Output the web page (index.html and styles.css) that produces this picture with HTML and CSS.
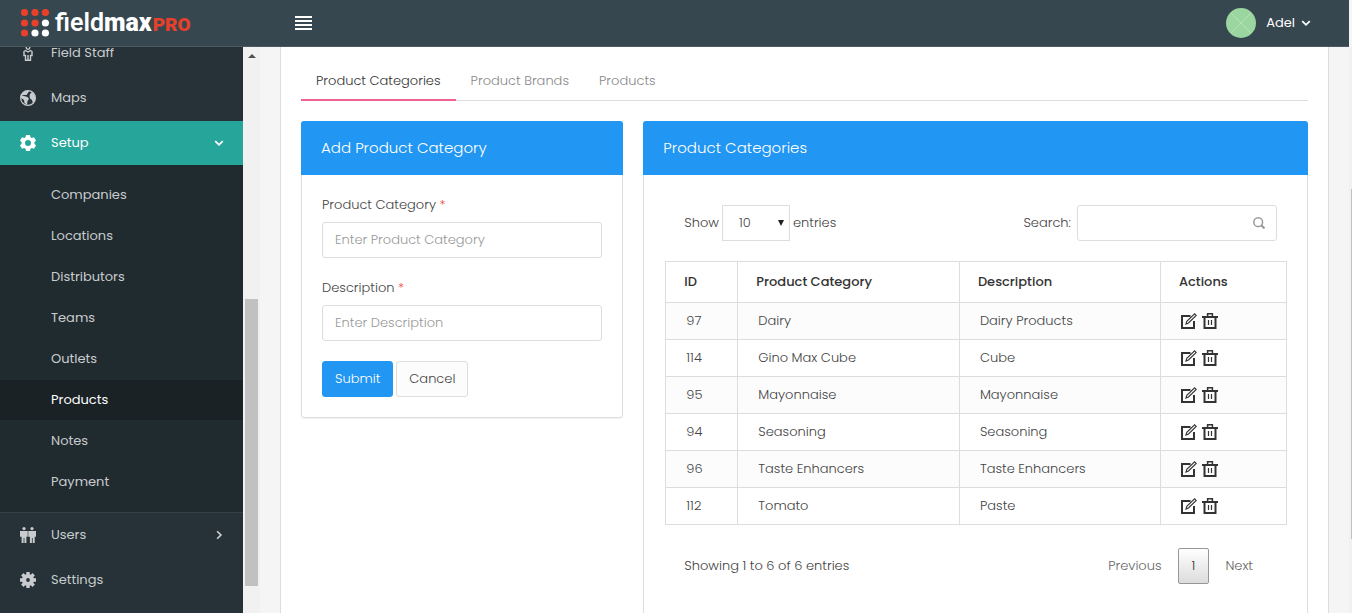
FILE: index.html
```
<!DOCTYPE html>
<html lang="en">
<head>
  <meta charset="UTF-8">
  <title>FieldMax Pro - Product Categories</title>
  <meta name="viewport" content="width=device-width,initial-scale=1">
  <link rel="stylesheet" href="styles.css">
</head>
<body>

  <!-- icons used more than once -->
  <svg class="sprite" aria-hidden="true">
    <symbol id="icon-edit" viewBox="0 0 16 16">
      <path d="M9.500 3H1v12h12V8" fill="none" stroke="currentColor" stroke-width="2"/>
      <path d="M5 11l.8-2.600L13.600.8l1.600 1.600L7.500 10z" fill="none" stroke="currentColor" stroke-width="1.100"/>
    </symbol>
    <symbol id="icon-trash" viewBox="0 0 16 16">
      <path d="M0 4h16M2.500 4v11h11V4" fill="none" stroke="currentColor" stroke-width="2"/>
      <path d="M5.600 3V.8h4.800V3" fill="none" stroke="currentColor" stroke-width="1.500"/>
      <path d="M6.500 7v5M9.500 7v5" stroke="currentColor" stroke-width="1.200"/>
    </symbol>
    <symbol id="icon-down" viewBox="0 0 8 8">
      <path d="M1 2.500L4 5.500l3-3" fill="none" stroke="currentColor" stroke-width="1.400"/>
    </symbol>
  </svg>

  <header class="navbar">
    <a href="#" class="brand">
      <svg class="brand-dots" viewBox="0 0 28 28" aria-hidden="true">
        <g fill="#e8402a">
          <circle cx="3.500" cy="3.500" r="3.600"/><circle cx="14" cy="3.500" r="3.600"/><circle cx="24.400" cy="3.500" r="3.600"/>
          <circle cx="3.500" cy="14" r="3.600"/><circle cx="14" cy="14" r="3.600"/><circle cx="3.500" cy="24" r="3.600"/>
        </g>
        <g fill="#fff">
          <circle cx="24.400" cy="14" r="3.600"/><circle cx="14" cy="24" r="3.600"/><circle cx="24.400" cy="24" r="3.600"/>
        </g>
      </svg>
      <span class="brand-name">field<b>max</b></span><span class="brand-pro">PRO</span>
    </a>
    <button type="button" class="menu-toggle" aria-label="Toggle menu">
      <svg viewBox="0 0 17 14"><path d="M0 1h17M0 5h17M0 9h17M0 13h17" stroke="#fff" stroke-width="2"/></svg>
    </button>
    <button type="button" class="user">
      <svg class="avatar" viewBox="0 0 30 30" aria-hidden="true">
        <circle cx="15" cy="15" r="15" fill="#9bd5a0"/>
        <path d="M5 5l20 20M25 5L5 25" stroke="#b4dfb7" stroke-width="1"/>
      </svg>
      Adel
      <svg class="caret"><use href="#icon-down"/></svg>
    </button>
  </header>

  <div class="page">
    <nav class="sidebar">
      <ul class="nav">
        <li>
          <a href="#">
            <svg class="nav-icon" viewBox="0 0 16 16"><circle cx="8" cy="2.500" r="1.800" fill="none" stroke="currentColor" stroke-width="1.300"/><path d="M5.500 5.500L8 7l2.500-1.500 1.500 1v4h-1.500v4.800h-5v-4.800H4v-4zM8 10v5" fill="none" stroke="currentColor" stroke-width="1.400"/></svg>
            Field Staff
          </a>
        </li>
        <li>
          <a href="#">
            <svg class="nav-icon" viewBox="0 0 16 16"><circle cx="8" cy="8" r="7.400" fill="none" stroke="currentColor" stroke-width="1.200"/><path d="M1 5l3 1 3.500 1 1.500 2-1.500 2L7 15 4.500 13 4 10 1 8zM1.500 5l2-3 3-1.500L9 1 8 3 6.500 5 4 5zM10 4l2-2 2 2.500 1.300 3L15 11l-2 2.500L12 10l-2-1.500L9.500 6z" fill="currentColor"/></svg>
            Maps
          </a>
        </li>
        <li>
          <a href="#" class="open">
            <svg class="nav-icon" viewBox="0 0 16 16"><path fill-rule="evenodd" fill="currentColor" d="M6 0h4l.5 2.200 1.300.7 2.200-.7L16 5.600l-1.600 1.600v1.600L16 10.400l-2 3.400-2.200-.7-1.300.7L10 16H6l-.5-2.200-1.300-.7-2.200.7-2-3.400 1.600-1.600V7.200L0 5.600l2-3.400 2.200.7 1.300-.7zM8 5a3 3 0 1 0 0 6 3 3 0 0 0 0-6z"/></svg>
            Setup
            <svg class="arrow"><use href="#icon-down"/></svg>
          </a>
          <ul class="submenu">
            <li><a href="#">Companies</a></li>
            <li><a href="#">Locations</a></li>
            <li><a href="#">Distributors</a></li>
            <li><a href="#">Teams</a></li>
            <li><a href="#">Outlets</a></li>
            <li><a href="#" class="active">Products</a></li>
            <li><a href="#">Notes</a></li>
            <li><a href="#">Payment</a></li>
          </ul>
        </li>
        <li>
          <a href="#">
            <svg class="nav-icon" viewBox="0 0 16 16" fill="currentColor"><circle cx="4" cy="1.600" r="1.600"/><path d="M0 4h7.700v5.800H6.400V16H4.400v-5h-.8v5h-2V9.800H0z"/><circle cx="12" cy="1.600" r="1.600"/><path d="M8.300 4H16v5.800h-1.300V16h-2v-5h-.8v5h-2V9.800H8.300z"/></svg>
            Users
            <svg class="arrow right"><use href="#icon-down"/></svg>
          </a>
        </li>
        <li>
          <a href="#">
            <svg class="nav-icon" viewBox="0 0 16 16"><circle cx="8" cy="8" r="4" fill="none" stroke="currentColor" stroke-width="4.200"/><path d="M8 0v3M8 13v3M0 8h3M13 8h3M2.300 2.300l2.200 2.200M11.500 11.500l2.200 2.200M2.300 13.700l2.200-2.200M11.500 4.500l2.200-2.200" stroke="currentColor" stroke-width="3.400"/></svg>
            Settings
          </a>
        </li>
      </ul>
    </nav>
    <div class="scrollbar" aria-hidden="true"><span class="scroll-up"></span><span class="scroll-thumb"></span></div>

    <main class="content">
      <div class="panel">
        <ul class="tabs">
          <li><a href="#" class="active">Product Categories</a></li>
          <li><a href="#">Product Brands</a></li>
          <li><a href="#">Products</a></li>
        </ul>

        <div class="row">
          <section class="card">
            <h2>Add Product Category</h2>
            <form class="card-form">
              <label for="category">Product Category <span class="required">*</span></label>
              <input type="text" id="category" placeholder="Enter Product Category">
              <label for="description">Description <span class="required">*</span></label>
              <input type="text" id="description" placeholder="Enter Description">
              <div class="buttons">
                <button type="submit" class="btn btn-primary">Submit</button>
                <button type="button" class="btn">Cancel</button>
              </div>
            </form>
          </section>

          <section class="card card-tall">
            <h2>Product Categories</h2>
            <div class="card-table">
              <div class="table-tools">
                <div class="length">
                  <label for="length">Show</label>
                  <span class="select">
                    <select id="length"><option>10</option><option>25</option><option>50</option></select>
                  </span>
                  <span>entries</span>
                </div>
                <div class="search">
                  <label for="search">Search:</label>
                  <span class="search-box">
                    <input type="search" id="search">
                    <svg viewBox="0 0 12 12" aria-hidden="true"><circle cx="5.200" cy="5.200" r="4.400" fill="none" stroke="#999" stroke-width="1.500"/><path d="M8.300 8.300L11.500 11.500" stroke="#999" stroke-width="2"/></svg>
                  </span>
                </div>
              </div>

              <table>
                <thead>
                  <tr><th class="col-id">ID</th><th class="col-category">Product Category</th><th class="col-description">Description</th><th>Actions</th></tr>
                </thead>
                <tbody id="rows"></tbody>
              </table>

              <div class="table-footer">
                <span>Showing 1 to 6 of 6 entries</span>
                <div class="pagination">
                  <a href="#">Previous</a>
                  <a href="#" class="current">1</a>
                  <a href="#">Next</a>
                </div>
              </div>
            </div>
          </section>
        </div>
      </div>
    </main>
    <div class="page-scroll" aria-hidden="true"><span></span></div>
  </div>

  <script>
    const categories = [
      [97, 'Dairy', 'Dairy Products'],
      [114, 'Gino Max Cube', 'Cube'],
      [95, 'Mayonnaise', 'Mayonnaise'],
      [94, 'Seasoning', 'Seasoning'],
      [96, 'Taste Enhancers', 'Taste Enhancers'],
      [112, 'Tomato', 'Paste']
    ];

    document.getElementById('rows').innerHTML = categories.map(([id, name, description]) => `
      <tr>
        <td>${id}</td>
        <td>${name}</td>
        <td>${description}</td>
        <td>
          <div class="actions">
            <a href="#" aria-label="Edit"><svg><use href="#icon-edit"/></svg></a>
            <a href="#" aria-label="Delete"><svg><use href="#icon-trash"/></svg></a>
          </div>
        </td>
      </tr>
    `).join('');
  </script>
</body>
</html>
```
FILE: styles.css
```
* { box-sizing: border-box; }
body {
  display: flex;
  flex-direction: column;
  height: 100vh;
  margin: 0;
  overflow: hidden;
  background: #f5f5f5;
  color: #444;
  font-family: Poppins, Inter, sans-serif;
  font-size: 13px;
  font-weight: 300;
  line-height: 20px;
}
ul {
  list-style: none;
  margin: 0;
  padding: 0;
}
a {
  color: inherit;
  text-decoration: none;
}
svg {
  display: block;
  flex: none;
}
button, input, select {
  font: inherit;
  color: inherit;
}
.sprite {
  position: absolute;
  width: 0;
  height: 0;
}

/* -------- top bar -------- */
.navbar {
  display: flex;
  flex: none;
  align-items: center;
  height: 47px;
  margin-right: 3px;
  background: #37474f;
  border-bottom: 1px solid #4b5a61;
  color: #fff;
  z-index: 1;
}
.brand {
  display: flex;
  align-items: center;
  width: 280px;
  padding-left: 21px;
  font-family: Roboto, sans-serif;
  font-weight: 600;
  line-height: 28px;
}
.brand-dots {
  width: 28px;
  height: 28px;
  margin-right: 6px;
}
.brand-name {
  font-size: 25px;
}
.brand-name b {
  font-weight: 900;
}
.brand-pro {
  margin-left: 1px;
  padding-top: 3px;
  color: #e8402a;
  font-size: 19px;
  font-weight: 900;
}
.menu-toggle {
  padding: 15px;
  background: none;
  border: 0;
}
.menu-toggle svg {
  width: 17px;
  height: 14px;
}
.user {
  display: flex;
  align-items: center;
  margin-left: auto;
  padding: 0 38px 0 0;
  background: none;
  border: 0;
  font-weight: 400;
}
.avatar {
  width: 30px;
  height: 30px;
  margin-right: 10px;
}
.caret {
  width: 10px;
  height: 10px;
  margin-left: 6px;
}

/* -------- sidebar -------- */
.page {
  display: flex;
  flex: 1;
  min-height: 0;
}
.sidebar {
  flex: none;
  width: 243px;
  overflow: hidden;
  background: #263238;
  color: #c9ccce;
  font-weight: 400;
}
/* list is scrolled a little under the top bar */
.nav {
  margin-top: -16px;
}
.nav > li > a {
  display: flex;
  align-items: center;
  height: 44px;
  margin-bottom: 1px;
  padding: 0 19px 0 20px;
}
.nav > li > a.open {
  margin-bottom: 0;
  background: #26a69a;
  color: #fff;
}
.nav-icon {
  width: 16px;
  height: 16px;
  margin-right: 15px;
}
.arrow {
  width: 10px;
  height: 10px;
  margin-left: auto;
}
.arrow.right {
  transform: rotate(-90deg);
}
.submenu {
  padding: 10px 0 9px;
  background: #202b30;
  border-bottom: 1px solid #35424a;
}
.submenu a {
  display: block;
  margin-bottom: 1px;
  padding: 10px 20px 10px 51px;
}
.submenu a.active {
  background: #1a2226;
  color: #fff;
}
.scrollbar {
  display: flex;
  flex: none;
  flex-direction: column;
  align-items: center;
  width: 17px;
  padding: 7px 2px 27px;
  background: #f1f1f1;
}
.scroll-up {
  border: 4px solid transparent;
  border-top: 0;
  border-bottom-color: #505050;
}
.scroll-thumb {
  width: 13px;
  height: 54%;
  margin-top: auto;
  background: #c1c1c1;
}

/* -------- content -------- */
.content {
  flex: 1;
  min-width: 0;
  padding: 0 20px;
  overflow: hidden;
}
.panel {
  min-height: 100%;
  padding: 16px 20px;
  background: #fff;
  border: 1px solid #ddd;
  border-width: 0 1px;
}
.tabs {
  display: flex;
  margin-bottom: 20px;
  border-bottom: 1px solid #ddd;
}
.tabs a {
  display: block;
  margin-bottom: -1px;
  padding: 8px 15px;
  border-bottom: 2px solid transparent;
  color: #888;
}
.tabs a.active {
  border-color: #f06292;
  color: #333;
}
.row {
  display: grid;
  grid-template-columns: calc((100% + 20px) / 3 - 20px) 1fr;
  align-items: start;
  gap: 20px;
}
.card {
  min-width: 0;
  border: 1px solid #ddd;
  border-radius: 3px;
  box-shadow: 0 1px 1px rgba(0,0,0,0.05);
}
.card-tall {
  min-height: 560px;
}
.card h2 {
  margin: -1px -1px 0;
  padding: 17px 20px;
  background: #2196f3;
  border-radius: 3px 3px 0 0;
  color: #fff;
  font-size: 15px;
  font-weight: 300;
}
.card-form {
  padding: 20px;
}
.card-form label {
  display: block;
  margin-bottom: 7px;
}
.required {
  color: #f44336;
}
input {
  width: 100%;
  height: 36px;
  padding: 7px 12px;
  background: #fff;
  border: 1px solid #ddd;
  border-radius: 3px;
}
input::placeholder {
  color: #999;
}
.card-form input {
  display: block;
  margin-bottom: 20px;
}
.buttons {
  display: flex;
  gap: 3px;
}
.btn {
  height: 36px;
  padding: 0 12px;
  background: #fcfcfc;
  border: 1px solid #ddd;
  border-radius: 3px;
}
.btn-primary {
  background: #2196f3;
  border-color: #2196f3;
  color: #fff;
}

/* -------- table -------- */
.card-table {
  padding: 30px 20px 20px 21px;
}
.table-tools, .table-footer {
  display: flex;
  justify-content: space-between;
  align-items: center;
  padding: 0 10px 0 19px;
}
.length {
  display: flex;
  align-items: center;
  gap: 3px;
}
.search {
  display: flex;
  align-items: center;
  gap: 6px;
}
.select, .search-box {
  position: relative;
}
.select::after {
  content: "";
  position: absolute;
  top: 15px;
  right: 6px;
  border: 3px solid transparent;
  border-top: 6px solid #222;
  border-bottom: 0;
  pointer-events: none;
}
select {
  display: block;
  appearance: none;
  width: 68px;
  height: 36px;
  padding: 0 16px;
  background: #fff;
  border: 1px solid #ddd;
  border-radius: 0;
}
.search-box {
  width: 200px;
}
.search-box input {
  display: block;
  padding-right: 36px;
}
.search-box svg {
  position: absolute;
  top: 12px;
  right: 12px;
  width: 12px;
  height: 12px;
}
table {
  width: 100%;
  margin: 20px 0 23px;
  border-collapse: collapse;
  table-layout: fixed;
}
th, td {
  height: 37px;
  padding: 0 20px;
  border: 1px solid #ddd;
  text-align: left;
}
th {
  height: 41px;
  padding: 0 18px;
  color: #333;
  font-weight: 500;
}
tbody tr:nth-child(odd) {
  background: #fcfcfc;
}
.col-id {
  width: 11.6%;
}
.col-category {
  width: 35.7%;
}
.col-description {
  width: 32.4%;
}
.actions {
  display: flex;
  gap: 5px;
  color: #333;
}
.actions svg {
  width: 16px;
  height: 16px;
}
.table-footer {
  padding-right: 18px;
}
.pagination {
  display: flex;
  align-items: center;
}
.pagination a {
  padding: 7px 16px;
  color: #666;
}
.pagination a.current {
  padding: 7px 13px;
  background: linear-gradient(#fff, #dcdcdc);
  border: 1px solid #979797;
  border-radius: 2px;
  color: #333;
}

/* edge of the window scrollbar */
.page-scroll {
  flex: none;
  width: 3px;
  padding: 142px 0 74px 2px;
  background: #f1f1f1;
}
.page-scroll span {
  display: block;
  height: 100%;
  background: #c1c1c1;
}
```
